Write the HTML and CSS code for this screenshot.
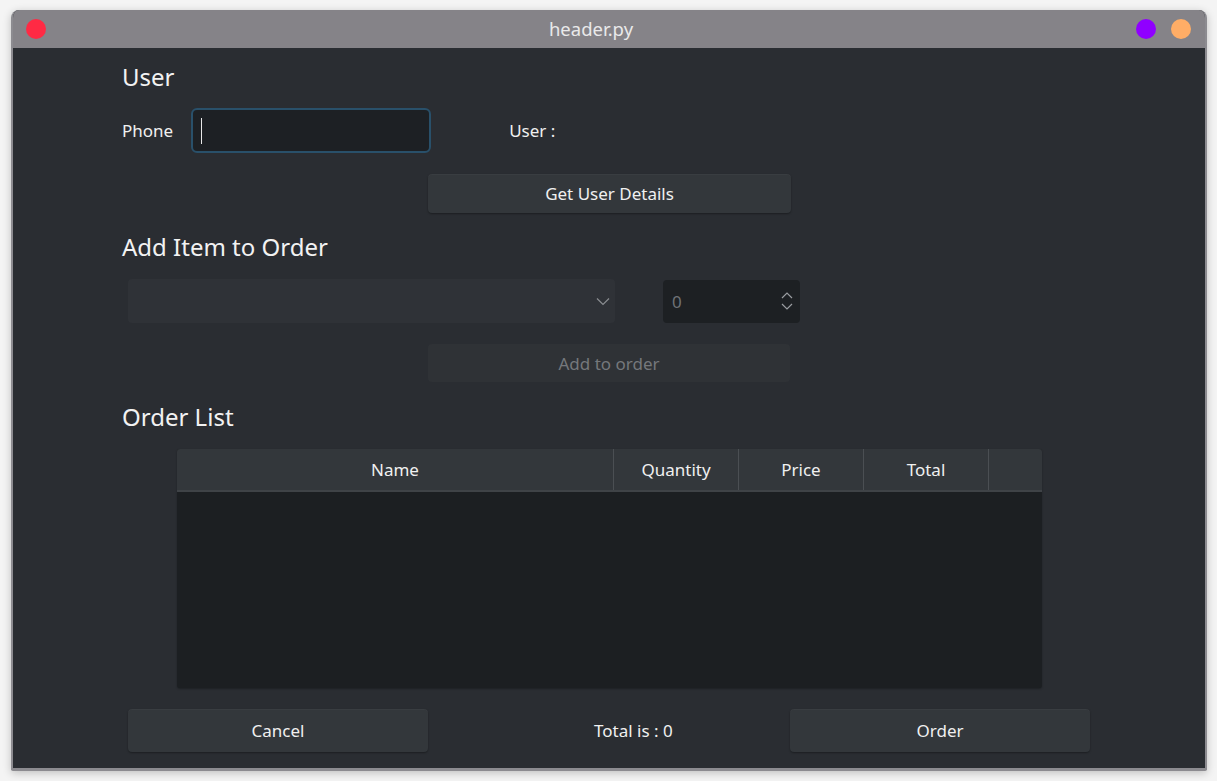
FILE: index.html
```html
<!DOCTYPE html>
<html>
<head>
<meta charset="utf-8">
<link rel="stylesheet" href="styles.css">
</head>
<body>
<div class="window">
  <div class="titlebar">
    <div class="tb-left"><span class="dot red"></span></div>
    <div class="title">header.py</div>
    <div class="tb-right"><span class="dot purple"></span><span class="dot orange"></span></div>
  </div>
  <div class="content">
    <div class="heading h-user">User</div>
    <div class="phone-row">
      <span class="label">Phone</span>
      <div class="input"><span class="caret"></span></div>
      <span class="label user-lbl">User :</span>
    </div>
    <div class="btn btn-get">Get User Details</div>
    <div class="heading h-add">Add Item to Order</div>
    <div class="item-row">
      <div class="combo">
        <svg class="chev" width="14" height="9" viewBox="0 0 14 9"><path d="M1 1.5 L7 7.5 L13 1.5" fill="none" stroke="#8a8d91" stroke-width="1.2"/></svg>
      </div>
      <div class="spin">
        <span class="spin-val">0</span>
        <div class="arrows">
          <svg width="12" height="8" viewBox="0 0 12 8"><path d="M1 7 L6 2 L11 7" fill="none" stroke="#9a9da1" stroke-width="1.2"/></svg>
          <svg width="12" height="8" viewBox="0 0 12 8"><path d="M1 1 L6 6 L11 1" fill="none" stroke="#9a9da1" stroke-width="1.2"/></svg>
        </div>
      </div>
    </div>
    <div class="btn btn-add disabled">Add to order</div>
    <div class="heading h-order">Order List</div>
    <div class="table">
      <div class="thead">
        <div class="th c-name">Name</div>
        <div class="th c-qty">Quantity</div>
        <div class="th c-price">Price</div>
        <div class="th c-total">Total</div>
        <div class="th c-extra"></div>
      </div>
      <div class="tbody"></div>
    </div>
    <div class="bottom-row">
      <div class="btn btn-cancel">Cancel</div>
      <div class="total">Total is : 0</div>
      <div class="btn btn-order">Order</div>
    </div>
  </div>
</div>
</body>
</html>
```
FILE: styles.css
```css
* { box-sizing: border-box; }
html, body { margin: 0; padding: 0; }
body {
  background: #f4f4f4;
  width: 1217px;
  height: 781px;
  overflow: hidden;
  font-family: "Noto Sans", "Open Sans", sans-serif;
  color: #f0f0f0;
}
.window {
  margin: 10px 0 0 11px;
  width: 1196px;
  height: 761px;
  background: #2a2d32;
  border: 2px solid #8c8b90;
  border-top: 0;
  border-bottom-width: 3px;
  border-radius: 8px 8px 2px 2px;
  box-shadow: 0 2px 8px rgba(0,0,0,0.22);
  overflow: hidden;
}
.titlebar {
  height: 38px;
  background: #858388;
  display: flex;
  align-items: center;
  margin: 0 -2px;
  padding: 0 16px 0 15px;
}
.tb-left, .tb-right { display: flex; gap: 15px; align-items: center; }
.title {
  flex: 1;
  text-align: center;
  font-size: 18.5px;
  color: #e9e9ea;
  line-height: 38px;
}
.dot { width: 20px; height: 20px; border-radius: 50%; display: block; }
.red { background: #ff2a44; }
.purple { background: #9000ff; }
.orange { background: #ffad66; }

.content {
  display: flex;
  flex-direction: column;
  align-items: flex-start;
  padding: 14px 0 0 109px;
}
.heading {
  font-size: 24px;
  line-height: 30px;
  height: 30px;
  color: #f2f2f2;
}
.h-add { margin-top: 19px; }
.h-order { margin-top: 20px; }
.label { font-size: 17px; color: #f0f0f0; }
.phone-row {
  margin-top: 16px;
  height: 45px;
  display: flex;
  align-items: center;
}
.input {
  margin-left: 18px;
  width: 240px;
  height: 45px;
  background: #1d2024;
  border: 2px solid #29506a;
  border-radius: 6px;
  display: flex;
  align-items: center;
  padding-left: 8px;
}
.caret { width: 1px; height: 26px; background: #e8e8e8; }
.user-lbl { margin-left: 78px; }

.btn {
  height: 39px;
  background: #33373b;
  border-radius: 4px;
  display: flex;
  align-items: center;
  justify-content: center;
  font-size: 17px;
  color: #f0f0f0;
  box-shadow: 0 1px 2px rgba(0,0,0,0.35), inset 0 1px 0 rgba(255,255,255,0.03);
}
.btn-get { margin-top: 21px; margin-left: 306px; width: 363px; }
.btn.disabled {
  background: #2f3236;
  color: #75787c;
  box-shadow: none;
}
.btn-add { margin-top: 21px; margin-left: 306px; width: 362px; height: 38px; }

.item-row {
  margin-top: 17px;
  display: flex;
  align-items: center;
  height: 44px;
}
.combo {
  margin-left: 6px;
  width: 487px;
  height: 44px;
  background: #2f3237;
  border-radius: 4px;
  display: flex;
  align-items: center;
  justify-content: flex-end;
  padding-right: 5px;
}
.spin {
  margin-left: 48px;
  width: 137px;
  height: 43px;
  background: #1d2023;
  border-radius: 4px;
  display: flex;
  align-items: center;
  padding: 0 7px 0 9px;
}
.spin-val { flex: 1; font-size: 17px; color: #6f7276; }
.arrows { display: flex; flex-direction: column; gap: 4px; }
.arrows svg { display: block; }

.table {
  margin-top: 17px;
  margin-left: 55px;
  width: 865px;
  height: 239px;
  background: #1c1f22;
  border-radius: 3px;
  display: flex;
  flex-direction: column;
  overflow: hidden;
  box-shadow: 0 1px 2px rgba(0,0,0,0.3);
}
.thead {
  height: 43px;
  display: flex;
  background: #33373b;
  border-bottom: 2px solid #3f4347;
}
.th {
  display: flex;
  align-items: center;
  justify-content: center;
  font-size: 17px;
  color: #f0f0f0;
  border-right: 1px solid #4b4f53;
}
.c-name { width: 437px; }
.c-qty { width: 125px; }
.c-price { width: 125px; }
.c-total { width: 125px; }
.c-extra { flex: 1; border-right: 0; }
.tbody { flex: 1; }

.bottom-row {
  margin-top: 21px;
  margin-left: 6px;
  display: flex;
  align-items: center;
  height: 43px;
}
.btn-cancel, .btn-order { width: 300px; height: 43px; }
.total {
  width: 362px;
  padding-left: 166px;
  font-size: 17px;
  color: #f0f0f0;
}
```
